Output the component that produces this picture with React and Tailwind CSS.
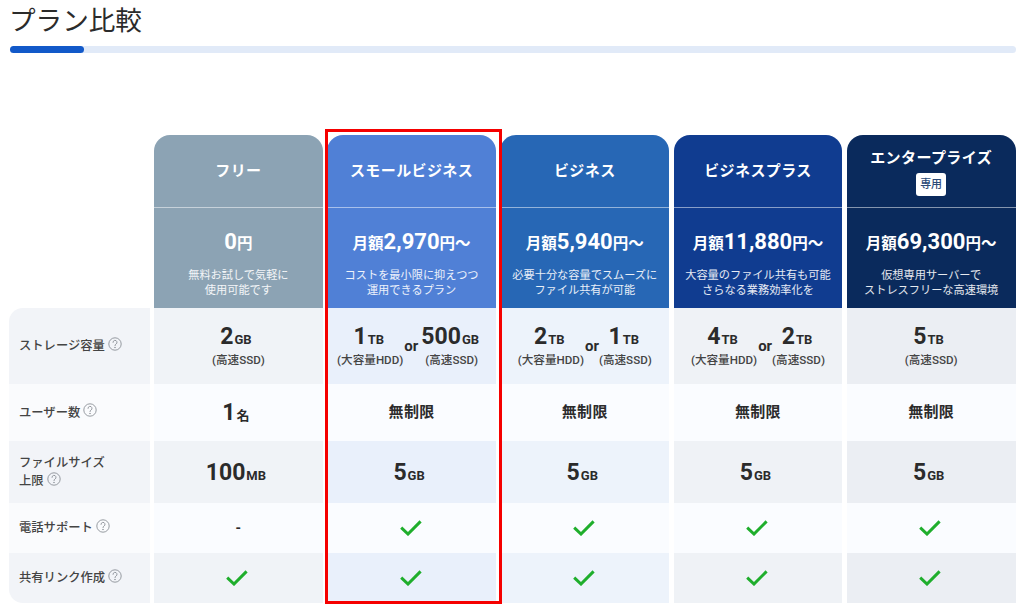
import React from "react";

const FONT = "[font-family:Roboto,'Noto_Sans_CJK_JP',sans-serif]";
const GRID = "grid grid-cols-[140.6px_repeat(5,168.8px)] gap-x-[4.4px]";

const plans = [
  { name: "フリー", head: "bg-[#8ca3b4]", price: [null, "0", "円"], desc: ["無料お試しで気軽に", "使用可能です"], tint: "bg-[#f0f3f7]" },
  { name: "スモールビジネス", head: "bg-[#5080d6]", price: ["月額", "2,970", "円〜"], desc: ["コストを最小限に抑えつつ", "運用できるプラン"], tint: "bg-[#e9f0fb]" },
  { name: "ビジネス", head: "bg-[#2767b5]", price: ["月額", "5,940", "円〜"], desc: ["必要十分な容量でスムーズに", "ファイル共有が可能"], tint: "bg-[#edf3fb]" },
  { name: "ビジネスプラス", head: "bg-[#103c90]", price: ["月額", "11,880", "円〜"], desc: ["大容量のファイル共有も可能", "さらなる業務効率化を"], tint: "bg-[#eff2f6]" },
  { name: "エンタープライズ", badge: "専用", head: "bg-[#0a2a5c]", price: ["月額", "69,300", "円〜"], desc: ["仮想専用サーバーで", "ストレスフリーな高速環境"], tint: "bg-[#ebeef3]" },
];

const Help = () => (
  <svg viewBox="0 0 14 14" className="inline-block w-[14px] h-[14px] ml-[3px] align-middle -translate-y-[3px]" fill="none" stroke="#7f848b" strokeWidth="0.8">
    <circle cx="7" cy="7" r="6.2" />
    <path d="M5 5.4a2 2 0 1 1 3 1.7c-.7.4-1 .8-1 1.5" strokeLinecap="round" />
    <circle cx="7" cy="10.5" r="0.35" fill="#7f848b" />
  </svg>
);

const Check = () => (
  <svg viewBox="0 0 22 16" className="w-[22px] h-[16px] -translate-x-[1px]" fill="none" stroke="#1fae2c" strokeWidth="3">
    <path d="M1.2 7.6 8 14 20.6 1.4" />
  </svg>
);

const Amount = ({ n, u, pad = "pr-[5px]" }) => (
  <div className={`flex items-baseline justify-center text-[#2b2b2b] font-bold leading-none ${pad}`}>
    <span className="text-[23px]">{n}</span>
    <span className="text-[13px] ml-[1px]">{u}</span>
  </div>
);

const Sub = ({ children }) => (
  <div className="text-[11.6px] font-medium text-[#444] mt-[5px] leading-[14px] whitespace-nowrap">{children}</div>
);

const Storage = ({ opts, wide }) => {
  if (opts.length === 1) {
    return (
      <div className="flex flex-col items-center">
        <Amount n={opts[0][0]} u={opts[0][1]} />
        <Sub>{opts[0][2]}</Sub>
      </div>
    );
  }
  return (
    <div className={`flex items-start justify-center ${wide ? "pr-[4px]" : ""}`}>
      <div className="flex flex-col items-center">
        <Amount n={opts[0][0]} u={opts[0][1]} pad="pr-[3px]" />
        <Sub>{opts[0][2]}</Sub>
      </div>
      <div className={`text-[15px] font-bold text-[#2b2b2b] mt-[12px] ml-[1px] leading-[18px] ${wide ? "mr-[3px]" : ""}`}>or</div>
      <div className="flex flex-col items-center">
        <Amount n={opts[1][0]} u={opts[1][1]} pad="pr-[3px]" />
        <Sub>{opts[1][2]}</Sub>
      </div>
    </div>
  );
};

const Unlimited = () => <div className="text-[15px] font-bold text-[#2b2b2b] tracking-[0.3px]">無制限</div>;
const Dash = () => <div className="text-[14px] font-bold text-[#2b2b2b]">-</div>;

const rows = [
  {
    h: "h-[76px]",
    label: <>ストレージ容量<Help /></>,
    labelBg: "rounded-tl-[14px]",
    cells: [
      <Storage opts={[["2", "GB", "(高速SSD)"]]} />,
      <Storage wide opts={[["1", "TB", "(大容量HDD)"], ["500", "GB", "(高速SSD)"]]} />,
      <Storage opts={[["2", "TB", "(大容量HDD)"], ["1", "TB", "(高速SSD)"]]} />,
      <Storage opts={[["4", "TB", "(大容量HDD)"], ["2", "TB", "(高速SSD)"]]} />,
      <Storage opts={[["5", "TB", "(高速SSD)"]]} />,
    ],
    tinted: true,
  },
  {
    h: "h-[57px]",
    label: <>ユーザー数<Help /></>,
    cells: [<Amount n="1" u="名" />, <Unlimited />, <Unlimited />, <Unlimited />, <Unlimited />],
  },
  {
    h: "h-[62px]",
    label: <>ファイルサイズ<br />上限<Help /></>,
    cells: [<Amount n="100" u="MB" />, <Amount n="5" u="GB" />, <Amount n="5" u="GB" />, <Amount n="5" u="GB" />, <Amount n="5" u="GB" />],
    tinted: true,
  },
  {
    h: "h-[50px]",
    label: <>電話サポート<Help /></>,
    cells: [<Dash />, <Check />, <Check />, <Check />, <Check />],
  },
  {
    h: "h-[50px]",
    label: <>共有リンク作成<Help /></>,
    labelBg: "rounded-bl-[14px]",
    cells: [<Check />, <Check />, <Check />, <Check />, <Check />],
    tinted: true,
  },
];

export default function App() {
  return (
    <div className={`${FONT} w-[1024px] h-[607px] overflow-hidden bg-white relative`}>
      <div className="pl-[10px] pr-[8px]">
        <h1 className="text-[26.6px] leading-[38px] pt-[2px] -ml-[1px] font-normal text-[#2b2b2b]">プラン比較</h1>
        <div className="h-[7px] mt-[6px] rounded-full bg-[#e1eaf8]">
          <div className="h-full w-[74px] rounded-full bg-[#1259c9]" />
        </div>
      </div>

      <div className="relative ml-[9px] mt-[82px] w-[1007px]">
        <div className={GRID}>
          <div />
          {plans.map((p) => (
            <div key={p.name} className={`${p.head} rounded-t-[16px] text-white text-center`}>
              <div className="h-[72px] flex flex-col items-center justify-center border-b border-white/50 box-content">
                <div className="text-[15px] font-bold leading-[20px] tracking-[0.4px]">{p.name}</div>
                {p.badge && (
                  <div className="mt-[5px] mb-[-2px] w-[30px] h-[23px] rounded-[3px] bg-white text-[#2b4a77] text-[11px] leading-[23px] font-medium">
                    {p.badge}
                  </div>
                )}
              </div>
              <div className="h-[100px] flex flex-col items-center pt-[22px]">
                <div className="flex items-baseline font-bold leading-[24px]">
                  {p.price[0] && <span className="text-[15.5px]">{p.price[0]}</span>}
                  <span className="text-[22px]">{p.price[1]}</span>
                  <span className="text-[15.5px]">{p.price[2]}</span>
                </div>
                <div className="text-[11.2px] leading-[15px] mt-[12px] text-white/90 whitespace-nowrap">
                  {p.desc[0]}
                  <br />
                  {p.desc[1]}
                </div>
              </div>
            </div>
          ))}
        </div>

        {rows.map((r, i) => (
          <div key={i} className={`${GRID} ${r.h}`}>
            <div className={`flex items-center pl-[10px] text-[12.3px] leading-[18px] font-medium text-[#444] ${r.tinted ? "bg-[#f2f4f8]" : "bg-[#fafbfd]"} ${r.labelBg || ""}`}>
              <div>{r.label}</div>
            </div>
            {r.cells.map((c, j) => (
              <div key={j} className={`flex items-center justify-center ${r.tinted ? plans[j].tint : "bg-[#fafcff]"}`}>
                {c}
              </div>
            ))}
          </div>
        ))}

        <div className="absolute left-[315.6px] top-[-6px] w-[177.4px] h-[475px] border-[3px] border-[#f50000] pointer-events-none" />
      </div>
    </div>
  );
}
